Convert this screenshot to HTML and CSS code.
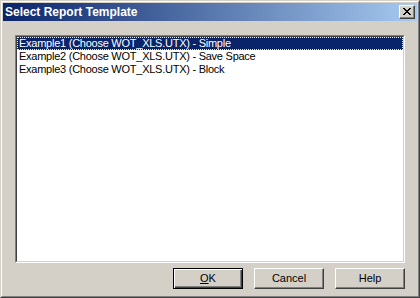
FILE: index.html
```html
<!DOCTYPE html>
<html>
<head>
<meta charset="utf-8">
<link rel="stylesheet" href="styles.css">
</head>
<body>
<div class="window">
  <div class="frame">
    <div class="titlebar">
      <span class="title">Select Report Template</span>
      <div class="close">
        <svg width="8" height="7" viewBox="0 0 8 7">
          <path d="M0 0h2v1h-2zM6 0h2v1h-2zM1 1h2v1h-2zM5 1h2v1h-2zM2 2h4v1h-4zM3 3h2v1h-2zM2 4h4v1h-4zM1 5h2v1h-2zM5 5h2v1h-2zM0 6h2v1h-2zM6 6h2v1h-2z" fill="#000"/>
        </svg>
      </div>
    </div>
    <div class="content">
      <div class="listbox">
        <div class="listinner">
          <div class="item selected">Example1 (Choose WOT_XLS.UTX) - Simple</div>
          <div class="item">Example2 (Choose WOT_XLS.UTX) - Save Space</div>
          <div class="item">Example3 (Choose WOT_XLS.UTX) - Block</div>
        </div>
      </div>
      <div class="buttons">
        <div class="btn default"><span class="u">O</span>K</div>
        <div class="btn">Cancel</div>
        <div class="btn">Help</div>
      </div>
    </div>
  </div>
</div>
</body>
</html>
```
FILE: styles.css
```css
html, body {
  margin: 0;
  padding: 0;
  background: #d4d0c8;
}
body {
  font-family: "Liberation Sans", Arial, sans-serif;
  font-size: 11px;
  color: #000;
}
.window {
  width: 420px;
  height: 298px;
  box-sizing: border-box;
  border: 1px solid;
  border-color: #d4d0c8 #404040 #404040 #d4d0c8;
}
.frame {
  height: 100%;
  box-sizing: border-box;
  border: 1px solid;
  border-color: #ffffff #808080 #808080 #ffffff;
  padding: 1px;
  background: #d4d0c8;
  display: flex;
  flex-direction: column;
}
.titlebar {
  height: 18px;
  flex: none;
  display: flex;
  align-items: center;
  justify-content: space-between;
  padding: 0 2px 0 2px;
  background: linear-gradient(to right, #0a246a, #a6caf0);
}
.title {
  color: #fff;
  font-weight: bold;
  font-size: 12px;
}
.close {
  width: 16px;
  height: 14px;
  box-sizing: border-box;
  background: #d4d0c8;
  border: 1px solid;
  border-color: #ffffff #404040 #404040 #ffffff;
  box-shadow: inset -1px -1px #808080;
  display: flex;
  align-items: center;
  justify-content: center;
  padding: 0 1px 1px 0;
}
.close svg {
  display: block;
}
.content {
  flex: 1;
  display: flex;
  flex-direction: column;
  padding: 14px 12px 0 12px;
}
.listbox {
  height: 228px;
  box-sizing: border-box;
  border: 1px solid;
  border-color: #808080 #ffffff #ffffff #808080;
}
.listinner {
  height: 100%;
  box-sizing: border-box;
  border: 1px solid;
  border-color: #404040 #d4d0c8 #d4d0c8 #404040;
  background: #ffffff;
}
.item {
  height: 13px;
  line-height: 13px;
  padding-left: 2px;
  white-space: nowrap;
  letter-spacing: -0.25px;
}
.item.selected {
  background: #0a246a;
  color: #fff;
  outline: 1px dotted #f5f0b0;
  outline-offset: -1px;
}
.buttons {
  display: flex;
  justify-content: flex-end;
  gap: 11px;
  margin-top: 5px;
}
.btn {
  width: 70px;
  height: 21px;
  box-sizing: border-box;
  border: 1px solid;
  border-color: #ffffff #404040 #404040 #ffffff;
  box-shadow: inset -1px -1px #808080, inset 1px 1px #d4d0c8;
  display: flex;
  align-items: center;
  justify-content: center;
  line-height: 13px;
}
.btn.default {
  border-color: #000;
  box-shadow: inset 1px 1px #ffffff, inset -1px -1px #404040, inset -2px -2px #808080;
}
.u {
  text-decoration: underline;
}
```
